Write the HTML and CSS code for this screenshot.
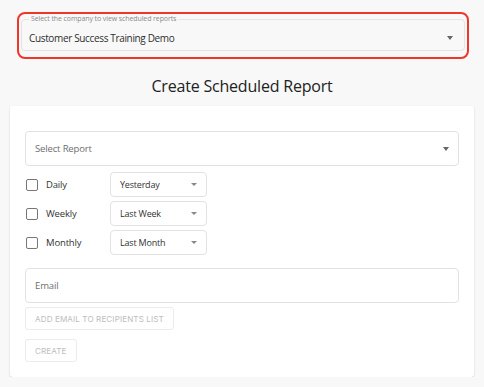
FILE: index.html
```html
<!DOCTYPE html>
<html><head>
<meta charset="utf-8">
<link rel="stylesheet" href="styles.css">
</head><body>
<div class="company_wrap">
	<fieldset class="company_field">
		<legend>Select the company to view scheduled reports</legend>
		<div class="select_row">
			<span class="value">Customer Success Training Demo</span>
			<span class="caret"></span>
		</div>
	</fieldset>
</div>

<h1 class="page_title">Create Scheduled Report</h1>

<div class="card">
	<div class="field select_field">
		<span class="placeholder">Select Report</span>
		<span class="caret"></span>
	</div>

	<div class="schedule_list">
		<div class="schedule_row">
			<label class="check"><span class="box"></span>Daily</label>
			<div class="small_select"><span>Yesterday</span><span class="caret"></span></div>
		</div>
		<div class="schedule_row">
			<label class="check"><span class="box"></span>Weekly</label>
			<div class="small_select"><span>Last Week</span><span class="caret"></span></div>
		</div>
		<div class="schedule_row">
			<label class="check"><span class="box"></span>Monthly</label>
			<div class="small_select"><span>Last Month</span><span class="caret"></span></div>
		</div>
	</div>

	<div class="field email_field">
		<span class="placeholder">Email</span>
	</div>
	<div class="btn_row"><button class="btn" disabled>ADD EMAIL TO RECIPIENTS LIST</button></div>
	<div class="btn_row create_row"><button class="btn" disabled>CREATE</button></div>
</div>
</body></html>
```

FILE: styles.css
```css
* {box-sizing: border-box;}
body {margin: 0;background: #f8f8f8;font-family: "Open Sans", "Noto Sans", sans-serif;color: #333;}

.company_wrap {margin: 12px 15px 0 17px;border: 2px solid #f0352b;border-radius: 8px;padding: 0 2px 2px 2px;height: 47px;}
.company_field {margin: 0;padding: 0 11px 0 7px;border: 1px solid #e4e4e4;border-radius: 4px;height: 37px;}
.company_field legend {font-size: 7px;color: #8a8a8a;padding: 0 2px;margin-left: 0;line-height: 10px;letter-spacing: -0.1px;}
.company_field .select_row {display: flex;align-items: center;justify-content: space-between;height: 27px;padding-top: 1px;}
.company_field .value {font-size: 10px;color: #2e2e2e;letter-spacing: -0.35px;}

.caret {width: 0;height: 0;border-left: 3.5px solid transparent;border-right: 3.5px solid transparent;border-top: 4px solid #666;}

.page_title {margin: 15px 0 0 0;text-align: center;font-size: 16px;font-weight: 400;color: #222;line-height: 24px;letter-spacing: -0.2px;}

.card {margin: 8px 10px 0 10px;background: #fff;border-radius: 3px;box-shadow: 0 1px 2px rgba(0,0,0,0.18);padding: 25px 15px 15px 15px;height: 271px;}

.field {border: 1px solid #e2e2e2;border-radius: 4px;height: 35px;display: flex;align-items: center;justify-content: space-between;padding: 0 9px 0 9px;}
.field .placeholder {font-size: 9.5px;color: #6e6e6e;letter-spacing: -0.15px;}

.schedule_list {margin-top: 6px;display: flex;flex-direction: column;gap: 4px;}
.schedule_row {display: flex;align-items: center;height: 25px;}
.check {display: flex;align-items: center;width: 85px;font-size: 9.5px;color: #333;padding-left: 1px;letter-spacing: -0.15px;}
.check .box {width: 12px;height: 12px;border: 1.5px solid #777;border-radius: 2px;margin-right: 8px;}
.small_select {width: 97px;height: 25px;border: 1px solid #e2e2e2;border-radius: 4px;display: flex;align-items: center;justify-content: space-between;padding: 0 9px 0 9px;font-size: 9px;color: #333;letter-spacing: -0.2px;}
.small_select .caret {border-left-width: 3px;border-right-width: 3px;border-top-width: 3.5px;border-top-color: #888;}

.email_field {margin-top: 13px;}

.btn_row {display: flex;margin-top: 4px;}
.create_row {margin-top: 9px;}
.btn {font-family: Inter, "Liberation Sans", sans-serif;font-size: 8.1px;color: #bdbdbd;background: #fff;border: 1px solid #ececec;border-radius: 3px;height: 23px;padding: 0 9px;letter-spacing: 0.1px;}
```
